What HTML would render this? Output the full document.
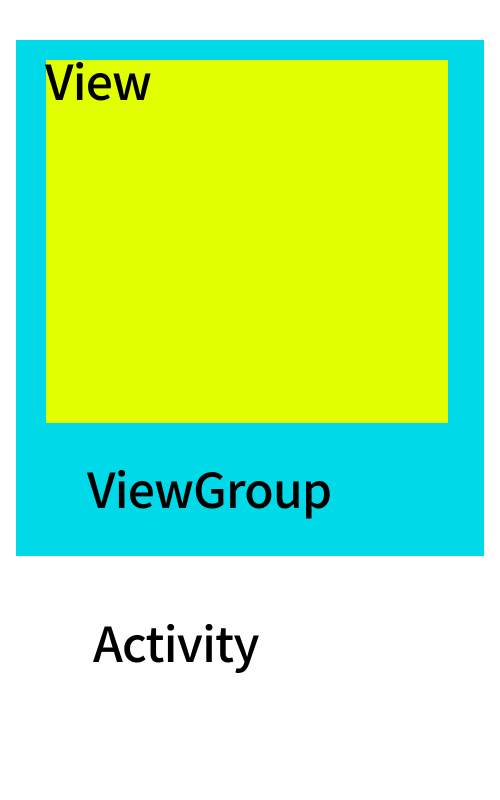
<!DOCTYPE html>
<html><head><style>
body{margin:0;width:500px;height:800px;background:#fff;position:relative;overflow:hidden;font-family:"Noto Sans CJK SC","Liberation Sans",sans-serif;}
div{position:absolute}
.t{font-size:48px;line-height:48px;font-weight:500;color:#000;white-space:nowrap;letter-spacing:-0.8px}
</style></head><body>
<div style="left:16px;top:40px;width:468px;height:516px;background:#00d9e8"></div>
<div style="left:46px;top:60px;width:402px;height:363px;background:#e1ff00"></div>
<div class="t" style="left:45px;top:55px">View</div>
<div class="t" style="left:87px;top:463px">ViewGroup</div>
<div class="t" style="left:93px;top:617px">Activity</div>
</body></html>
